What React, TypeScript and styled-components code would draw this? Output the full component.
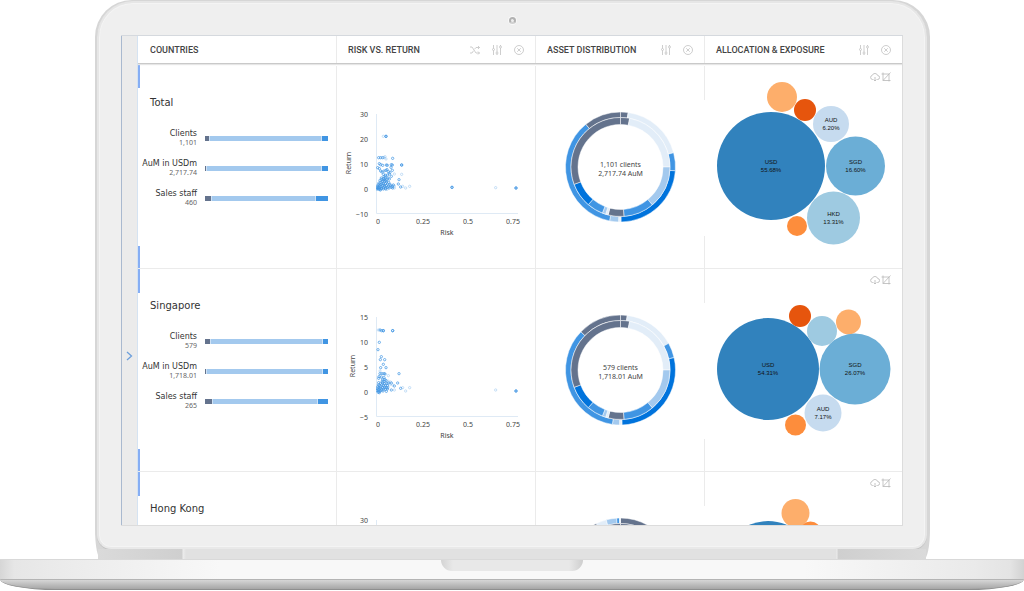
import React from "react";
import styled, { createGlobalStyle } from "styled-components";

const color = {
  slate: "#64738d",
  light: "#a3c9ee",
  blue: "#4095e3",
  deep: "#0073dc",
  pale: "#e2edf8",
  axis: "#dfeaf5",
  line: "#ebebeb",
};

const uiFont = `"Noto Sans", "Open Sans", sans-serif`;
const labelFont = `"DejaVu Sans", "Noto Sans", sans-serif`;

const GlobalStyle = createGlobalStyle`
  *, *::before, *::after { box-sizing: border-box; }
  body { margin: 0; background: #fff; color: #444; font-family: ${uiFont}; }
  h2, h3, p { margin: 0; font-weight: normal; }
  button { padding: 0; border: 0; background: none; color: inherit; display: flex; cursor: pointer; }
`;

/* ---------- Laptop ---------- */

const Page = styled.div`
  height: 100vh;
  display: flex;
  flex-direction: column;
  padding-bottom: 1px;
`;

const Lid = styled.div`
  flex: 1;
  min-height: 0;
  margin: 0 94px 0 95px;
  padding: 1px 3px 0 2px;
  display: flex;
  flex-direction: column;
  border-radius: 37px 37px 6px 6px / 37px 37px 30px 30px;
  background: #d6d6d6;
`;

const Face = styled.div`
  flex: 1;
  min-height: 0;
  display: flex;
  flex-direction: column;
  align-items: stretch;
  padding: 0 22px 21px;
  border: 2px solid #e6e6e6;
  border-bottom-color: #e9e9e9;
  border-radius: 36px 36px 14px 14px;
  background: #efefef;
  box-shadow: 0 1px 0 #c4c4c4, inset 0 0 0 1px #f4f4f4;
`;

const CameraBar = styled.div`
  height: 32px;
  display: flex;
  align-items: center;
  justify-content: center;
  padding-top: 2px;
`;

const Camera = styled.span`
  width: 7px;
  height: 7px;
  border: 2px solid #b2b2b2;
  border-bottom-color: #d0d0d0;
  border-radius: 50%;
  background: #ededed;
  box-shadow: 0 0 0 1px #f8f8f8;
`;

const Hinge = styled.div`
  height: 10px;
  margin: 0 1px;
  background: linear-gradient(90deg, #dadada 0, #cfcfcf 84px, #ececec 85px, #e1e1e1 88px, #e1e1e1 calc(100% - 90px), #ececec calc(100% - 89px), #cfcfcf calc(100% - 88px), #dadada 100%);
`;

const Base = styled.div`
  display: flex;
  flex-direction: column;
`;

const Deck = styled.div`
  height: 20px;
  display: flex;
  justify-content: center;
  border-top: 1px solid #d9d9d9;
  background: linear-gradient(90deg, #d6d6d6 0, #e6e6e6 14px, #eaeaea 50px, #f8f8f8 220px, #f8f8f8 calc(100% - 220px), #eaeaea calc(100% - 50px), #e4e4e4 calc(100% - 14px), #d2d2d2 100%);
`;

const Notch = styled.div`
  width: 142px;
  height: 11px;
  border-radius: 0 0 11px 11px;
  background: linear-gradient(90deg, #d4d4d4, #e8e8e8 12px, #e8e8e8 calc(100% - 14px), #cecece);
`;

const Underside = styled.div`
  height: 11px;
  border-top: 1px solid #b4b4b4;
  border-bottom: 1px solid #8f8f8f;
  border-radius: 0 0 56px 56px / 0 0 11px 11px;
  background: linear-gradient(#d6d6d6, #c0c0c0 4px, #a6a6a6);
`;

/* ---------- Dashboard ---------- */

const Screen = styled.div`
  flex: 1;
  min-height: 0;
  display: grid;
  grid-template-columns: 17px minmax(0, 1fr);
  overflow: hidden;
  border-top: 1px solid #d5d9de;
  border-bottom: 1px solid #dcdcdc;
  border-right: 1px solid #dcdcdc;
  background: #fff;
`;

const Drawer = styled.aside`
  display: flex;
  align-items: center;
  justify-content: center;
  padding-top: 150px;
  border-left: 1px solid #a9b9cf;
  border-right: 1px solid #d5e3f2;
  background: #ebebeb;
  color: #6c9fdc;
`;

const Dashboard = styled.main`
  min-width: 0;
  overflow: hidden;
`;

const columns = "198fr 199fr 169fr 198fr";

const HeaderRow = styled.header`
  display: grid;
  grid-template-columns: ${columns};
  height: 28px;
  border-bottom: 1px solid #c9c9c9;
  box-shadow: 0 1px 1px #e6e6e6;
  position: relative;
`;

const HeaderCell = styled.div<{ $ruled?: boolean }>`
  display: flex;
  align-items: center;
  justify-content: space-between;
  padding: 0 11px;
  padding-left: ${(p) => (p.$ruled ? 11 : 12)}px;
  border-left: ${(p) => (p.$ruled ? `1px solid ${color.line}` : "0")};
`;

const HeaderTitle = styled.h2`
  font: 500 9px/14px Roboto, sans-serif;
  color: #444;
  white-space: nowrap;
`;

const HeaderTools = styled.div`
  display: flex;
  gap: 12px;
  color: #c2c2c2;
`;

const Row = styled.section<{ $first?: boolean }>`
  display: grid;
  grid-template-columns: ${columns};
  height: ${(p) => (p.$first ? 205 : 203)}px;
  padding-top: ${(p) => (p.$first ? 2 : 0)}px;
  border-bottom: 1px solid ${color.line};
  background:
    linear-gradient(#86aef4, #86aef4) 0 0 / 2px 24px no-repeat,
    linear-gradient(#86aef4, #86aef4) 0 100% / 2px 22px no-repeat;
`;

const CountryCell = styled.div`
  padding: 29px 8px 0 0;
`;

const CountryName = styled.h3`
  padding-left: 12px;
  font: 400 10px/16px ${labelFont};
  color: #333;
`;

const Metrics = styled.div`
  display: grid;
  grid-auto-rows: 30px;
  padding-top: 12px;
`;

const Metric = styled.div`
  display: grid;
  grid-template-columns: 59px minmax(0, 1fr);
  align-items: center;
  gap: 8px;
`;

const MetricText = styled.div`
  display: flex;
  flex-direction: column;
  align-items: flex-end;
  white-space: nowrap;
`;

const MetricLabel = styled.span`
  font: 8px/10px ${labelFont};
  color: #333;
`;

const MetricValue = styled.span`
  font-size: 7px;
  line-height: 8px;
  color: #666;
`;

const Bar = styled.div`
  display: flex;
  gap: 1px;
  height: 5px;
  background: #cfe2f5;
`;

const BarPart = styled.span<{ $share: number; $tone: string }>`
  flex: ${(p) => p.$share} 0 0;
  background: ${(p) => p.$tone};
`;

const ChartCell = styled.div<{ $edge?: "full" | "broken" }>`
  position: relative;
  display: flex;
  min-width: 0;
  border-left: ${(p) => (p.$edge === "full" ? `1px solid ${color.line}` : "0")};
  background: ${(p) =>
    p.$edge === "broken"
      ? `linear-gradient(${color.line} 34px, transparent 34px 170px, ${color.line} 170px) 0 0 / 1px 100% no-repeat`
      : "none"};
`;

const CellTools = styled.div`
  position: absolute;
  top: 6px;
  right: 11px;
  display: flex;
  gap: 1px;
  color: #b8b8b8;
`;

const Chart = styled.svg`
  width: 100%;
  height: 202px;
  overflow: hidden;
`;

const AxisText = styled.text`
  font: 7px ${uiFont};
  fill: #444;
`;

const DonutText = styled.text`
  font: 7px ${uiFont};
  fill: #444;
  text-anchor: middle;
`;

const BubbleText = styled.text`
  font: 6px "Liberation Sans", sans-serif;
  fill: #111;
  text-anchor: middle;
`;

/* ---------- Icons ---------- */

const Svg = ({ size = 10, children }: { size?: number; children: React.ReactNode }) => (
  <svg width={size} height={size} viewBox="0 0 20 20" fill="none" stroke="currentColor" strokeWidth="1.6">
    {children}
  </svg>
);

const ShuffleIcon = () => (
  <Svg>
    <path d="M0 4h4l8 12h7M0 16h4l3-4.500M9 8.500 12 5h7M16 2l3 3-3 3M16 13l3 3-3 3" />
  </Svg>
);

const SlidersIcon = () => (
  <Svg>
    <path d="M3 0v7M3 11v9M10 0v14M10 18v2M17 0v2M17 6v14" />
    <circle cx="3" cy="9" r="2" />
    <circle cx="10" cy="16" r="2" />
    <circle cx="17" cy="4" r="2" />
  </Svg>
);

const CloseIcon = () => (
  <Svg>
    <circle cx="10" cy="10" r="9" />
    <path d="m6.500 6.500 7 7M13.500 6.500l-7 7" />
  </Svg>
);

const CloudIcon = () => (
  <Svg>
    <path d="M7 15H5a4.200 4.200 0 0 1-.4-8.300A5.600 5.600 0 0 1 15.300 7 4 4 0 0 1 15 15h-2M10 10v8M8 16l2 2 2-2" />
  </Svg>
);

const CropIcon = () => (
  <Svg>
    <path d="M4 1v16h15M1 4h15v15M4 17 19 1" />
  </Svg>
);

const ChevronIcon = () => (
  <svg width="7" height="10" viewBox="0 0 7 10" fill="none" stroke="currentColor" strokeWidth="1.3">
    <path d="m1 1 4.500 4L1 9" />
  </svg>
);

/* ---------- Data ---------- */

type Arc = [end: number, tone: string];
type Bubble = { x: number; y: number; r: number; tone: string; label?: string; share?: string };
type Point = [x: number, y: number, faint?: 1];

interface Country {
  name: string;
  metrics: { label: string; value: string; shares: [number, number, number] }[];
  xTicks: string[];
  yTicks: string[];
  returnX: number;
  points: Point[];
  outer: Arc[];
  inner: Arc[];
  clients?: string;
  aum?: string;
  bubbles: Bubble[];
}

const riskTicks = ["0", "0.25", "0.5", "0.75"];

const innerRing: Arc[] = [
  [10.6, color.slate], [90, color.pale], [140, color.light], [176, color.blue], [194.5, color.slate],
  [197.5, color.pale], [201.5, color.light], [220.5, color.blue], [249.5, color.deep], [360, color.slate],
];

/* Points sit on a grid of three units per pixel with its origin at the top of the return axis. */
const totalPoints: Point[] = [
  [22, 67, 1], [30, 67], [30, 67], [8, 131], [14, 131], [20, 131], [24, 131, 1], [30, 135, 1], [27, 128, 1], [50, 133],
  [10, 149], [14, 152], [20, 154], [31, 153], [34, 154], [46, 152], [49, 153], [77, 153], [77, 153], [45, 160],
  [5, 161], [10, 164], [49, 169], [14, 171], [18, 174], [24, 171], [30, 169], [33, 167], [37, 173], [42, 175],
  [55, 180, 1], [77, 181, 1], [22, 181], [28, 184], [34, 183], [40, 180], [46, 187], [16, 192], [22, 194],
  [27, 195], [32, 197], [36, 192], [40, 195], [69, 197], [12, 199], [19, 202], [25, 203], [32, 204], [38, 205],
  [9, 207], [67, 210], [52, 213], [42, 211], [34, 210], [17, 210], [7, 212], [5, 216], [10, 215], [15, 217],
  [20, 215], [26, 217], [31, 215], [37, 217], [43, 215], [49, 217], [55, 216, 1], [4, 221], [8, 220], [12, 222],
  [17, 222], [23, 221], [28, 222], [34, 220], [39, 222], [46, 220], [50, 222], [55, 222, 1], [3, 225], [7, 225],
  [11, 226], [16, 224], [22, 225], [29, 225], [33, 226, 1], [13, 228], [6, 222], [74, 219], [80, 217, 1],
  [24, 188], [29, 189], [18, 197], [24, 198], [29, 200], [15, 205], [22, 208], [28, 209], [13, 212], [24, 213],
  [89, 222, 1], [101, 217, 1], [228, 220], [228, 220], [359, 221, 1], [420, 222], [420, 222],
];

const singaporePoints: Point[] = [
  [7, 39, 1], [12, 39], [17, 41], [22, 41], [22, 41], [50, 41], [50, 41], [10, 76], [6, 98], [16, 119], [13, 128],
  [26, 128], [22, 142], [14, 152], [30, 152], [12, 162, 1], [69, 170], [12, 170], [18, 170], [24, 170], [27, 171],
  [37, 176, 1], [9, 179], [16, 180], [24, 182], [8, 184], [20, 187], [27, 188], [19, 192], [24, 194], [30, 191],
  [36, 192, 1], [43, 195, 1], [8, 197], [14, 199], [20, 198], [26, 200], [33, 199], [38, 198], [46, 198],
  [7, 204], [11, 205], [17, 203], [22, 206], [28, 205], [34, 206], [40, 204, 1], [65, 198], [55, 207], [50, 204, 1],
  [5, 210], [9, 211], [14, 210], [20, 212], [25, 210], [31, 212], [35, 212], [4, 216], [8, 217], [12, 215],
  [17, 217], [23, 216], [28, 217], [34, 216], [46, 219], [55, 219, 1], [3, 221], [7, 222], [11, 223], [15, 221],
  [21, 222], [31, 223], [7, 226], [10, 227], [74, 214], [80, 212, 1], [89, 222, 1], [101, 212, 1], [359, 219, 1],
  [420, 222], [420, 222],
];

const countries: Country[] = [
  {
    name: "Total",
    metrics: [
      { label: "Clients", value: "1,101", shares: [3, 92, 5] },
      { label: "AuM in USDm", value: "2,717.74", shares: [1, 94, 5] },
      { label: "Sales staff", value: "460", shares: [5, 85, 10] },
    ],
    xTicks: riskTicks,
    yTicks: ["30", "20", "10", "0", "−10"],
    returnX: 14,
    points: totalPoints,
    outer: [
      [8, color.slate], [75, color.pale], [94, color.blue], [179.5, color.deep], [182, color.pale],
      [191.5, color.light], [321, color.blue], [360, color.slate],
    ],
    inner: innerRing,
    clients: "1,101 clients",
    aum: "2,717.74 AuM",
    bubbles: [
      { x: 67, y: 100, r: 54, tone: "#3182bd", label: "USD", share: "55.68%" },
      { x: 78, y: 31, r: 15, tone: "#fdae6b" },
      { x: 101, y: 44, r: 11, tone: "#e6550d" },
      { x: 127, y: 58, r: 18, tone: "#c6dbef", label: "AUD", share: "6.20%" },
      { x: 151.5, y: 100, r: 29.5, tone: "#6baed6", label: "SGD", share: "16.60%" },
      { x: 129.5, y: 152, r: 26.5, tone: "#9ecae1", label: "HKD", share: "13.31%" },
      { x: 93, y: 160, r: 10, tone: "#fd8d3c" },
    ],
  },
  {
    name: "Singapore",
    metrics: [
      { label: "Clients", value: "579", shares: [4, 92, 4] },
      { label: "AuM in USDm", value: "1,718.01", shares: [1, 95, 4] },
      { label: "Sales staff", value: "265", shares: [6, 86, 8] },
    ],
    xTicks: riskTicks,
    yTicks: ["15", "10", "5", "0", "−5"],
    returnX: 18,
    points: singaporePoints,
    outer: [
      [7, color.slate], [61, color.pale], [77, color.blue], [178.5, color.deep], [181, color.pale],
      [188.5, color.light], [314, color.blue], [360, color.slate],
    ],
    inner: innerRing,
    clients: "579 clients",
    aum: "1,718.01 AuM",
    bubbles: [
      { x: 64, y: 100, r: 51, tone: "#3182bd", label: "USD", share: "54.31%" },
      { x: 96, y: 47, r: 11, tone: "#e6550d" },
      { x: 118, y: 62, r: 15, tone: "#9ecae1" },
      { x: 144.5, y: 53, r: 12.5, tone: "#fdae6b" },
      { x: 151, y: 100, r: 35.5, tone: "#6baed6", label: "SGD", share: "26.07%" },
      { x: 119, y: 144, r: 18.5, tone: "#c6dbef", label: "AUD", share: "7.17%" },
      { x: 91.5, y: 156, r: 10.5, tone: "#fd8d3c" },
    ],
  },
  {
    name: "Hong Kong",
    metrics: [],
    xTicks: [],
    yTicks: ["30"],
    returnX: 15,
    points: [],
    outer: [
      [60, color.slate], [334, color.slate], [345, color.pale], [356, color.light], [359, color.blue], [360, color.pale],
    ],
    inner: [[60, color.slate], [360, color.slate]],
    bubbles: [
      { x: 64, y: 96, r: 47, tone: "#3182bd" },
      { x: 91.5, y: 41, r: 14, tone: "#fdae6b" },
      { x: 106.5, y: 60, r: 10.5, tone: "#fd8d3c" },
    ],
  },
];

/* ---------- Charts ---------- */

function Scatter({ country }: { country: Country }) {
  return (
    <Chart viewBox="0 0 198 202" role="img" aria-label={`Risk vs. return, ${country.name}`}>
      <path d="M39.500 48v99.500H181" fill="none" stroke={color.axis} />
      {country.yTicks.map((t, i) => (
        <AxisText key={t} x="31" y={51 + i * 25} textAnchor="end">{t}</AxisText>
      ))}
      {country.xTicks.map((t, i) => (
        <AxisText key={t} x={41 + i * 45} y="158" textAnchor="middle">{t}</AxisText>
      ))}
      {country.xTicks.length > 0 && (
        <>
          <AxisText x="110" y="169" textAnchor="middle">Risk</AxisText>
          <AxisText transform={`translate(${country.returnX} 97) rotate(-90)`} textAnchor="middle">Return</AxisText>
        </>
      )}
      <svg x="39" y="48" width="150" height="100" viewBox="0 0 450 300">
        {country.points.map(([x, y, faint], i) => (
          <circle key={i} cx={x} cy={y} r="3.5" fill="none" stroke={color.blue} strokeWidth="2.4" opacity={faint ? 0.35 : 0.9} />
        ))}
      </svg>
    </Chart>
  );
}

function arcPath(from: number, to: number, r1: number, r2: number) {
  const at = (deg: number, r: number) => {
    const a = (deg * Math.PI) / 180;
    return `${(r * Math.sin(a)).toFixed(2)} ${(-r * Math.cos(a)).toFixed(2)}`;
  };
  const large = to - from > 180 ? 1 : 0;
  return `M${at(from, r2)}A${r2} ${r2} 0 ${large} 1 ${at(to, r2)}L${at(to, r1)}A${r1} ${r1} 0 ${large} 0 ${at(from, r1)}Z`;
}

function Ring({ arcs, r1, r2 }: { arcs: Arc[]; r1: number; r2: number }) {
  return (
    <>
      {arcs.map(([end, tone], i) => (
        <path key={i} d={arcPath(i ? arcs[i - 1][0] : 0, end, r1, r2)} fill={tone} stroke="#fff" strokeWidth="0.5" />
      ))}
    </>
  );
}

function Donut({ country }: { country: Country }) {
  return (
    <Chart viewBox="0 0 168 202" role="img" aria-label={`Asset distribution, ${country.name}`}>
      <g transform="translate(84.5 101)">
        <Ring arcs={country.outer} r1={49.5} r2={55} />
        <Ring arcs={country.inner} r1={42.5} r2={49.5} />
        {country.clients && <DonutText y="0">{country.clients}</DonutText>}
        {country.aum && <DonutText y="9">{country.aum}</DonutText>}
      </g>
    </Chart>
  );
}

function Bubbles({ country }: { country: Country }) {
  return (
    <Chart viewBox="0 0 198 202" role="img" aria-label={`Allocation and exposure, ${country.name}`}>
      {country.bubbles.map((b, i) => (
        <g key={i}>
          <circle cx={b.x} cy={b.y} r={b.r} fill={b.tone} />
          {b.label && (
            <>
              <BubbleText x={b.x} y={b.y - 2}>{b.label}</BubbleText>
              <BubbleText x={b.x} y={b.y + 6}>{b.share}</BubbleText>
            </>
          )}
        </g>
      ))}
    </Chart>
  );
}

/* ---------- Page ---------- */

const headers = [
  { title: "COUNTRIES", tools: [] as string[] },
  { title: "RISK VS. RETURN", tools: ["Shuffle", "Settings", "Close"] },
  { title: "ASSET DISTRIBUTION", tools: ["Settings", "Close"] },
  { title: "ALLOCATION & EXPOSURE", tools: ["Settings", "Close"] },
];

const toolIcons: Record<string, () => React.JSX.Element> = {
  Shuffle: ShuffleIcon,
  Settings: SlidersIcon,
  Close: CloseIcon,
};

const tones = [color.slate, color.light, color.blue];

export default function App() {
  return (
    <Page>
      <GlobalStyle />
      <Lid>
        <Face>
          <CameraBar><Camera /></CameraBar>
          <Screen>
            <Drawer>
              <button aria-label="Open panel"><ChevronIcon /></button>
            </Drawer>
            <Dashboard>
              <HeaderRow>
                {headers.map((h, i) => (
                  <HeaderCell key={h.title} $ruled={i > 0}>
                    <HeaderTitle>{h.title}</HeaderTitle>
                    <HeaderTools>
                      {h.tools.map((t) => {
                        const Icon = toolIcons[t];
                        return <button key={t} aria-label={t}><Icon /></button>;
                      })}
                    </HeaderTools>
                  </HeaderCell>
                ))}
              </HeaderRow>
              {countries.map((c, i) => (
                <Row key={c.name} $first={i === 0}>
                  <CountryCell>
                    <CountryName>{c.name}</CountryName>
                    <Metrics>
                      {c.metrics.map((m) => (
                        <Metric key={m.label}>
                          <MetricText>
                            <MetricLabel>{m.label}</MetricLabel>
                            <MetricValue>{m.value}</MetricValue>
                          </MetricText>
                          <Bar>
                            {m.shares.map((s, k) => <BarPart key={k} $share={s} $tone={tones[k]} />)}
                          </Bar>
                        </Metric>
                      ))}
                    </Metrics>
                  </CountryCell>
                  <ChartCell $edge="full"><Scatter country={c} /></ChartCell>
                  <ChartCell $edge="full"><Donut country={c} /></ChartCell>
                  <ChartCell $edge="broken">
                    <Bubbles country={c} />
                    <CellTools>
                      <button aria-label="Download"><CloudIcon /></button>
                      <button aria-label="Expand"><CropIcon /></button>
                    </CellTools>
                  </ChartCell>
                </Row>
              ))}
            </Dashboard>
          </Screen>
        </Face>
        <Hinge />
      </Lid>
      <Base>
        <Deck><Notch /></Deck>
        <Underside />
      </Base>
    </Page>
  );
}
